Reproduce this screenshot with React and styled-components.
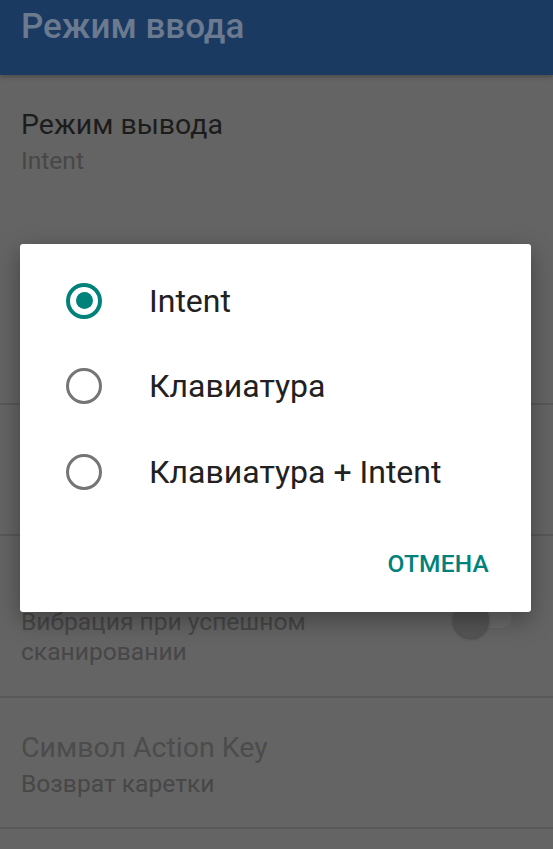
import styled, { createGlobalStyle } from "styled-components";

const GlobalStyle = createGlobalStyle`
  html, body {
    margin: 0;
    padding: 0;
    background: #646464;
    font-family: Roboto, "Noto Sans", "Liberation Sans", sans-serif;
  }
`;

const Screen = styled.div`
  position: relative;
  width: 553px;
  height: 849px;
  overflow: hidden;
  background: #646464;
`;

const Toolbar = styled.header`
  height: 75px;
  background: #1b3a62;
  padding: 7px 21px 0;
  box-sizing: border-box;
  box-shadow: 0 2px 4px rgba(0, 0, 0, 0.25);
`;

const ToolbarTitle = styled.h1`
  margin: 0;
  font-size: 35px;
  line-height: 40px;
  font-weight: 500;
  color: #6b7a8e;
`;

const PrefList = styled.div`
  display: flex;
  flex-direction: column;
`;

const PrefItem = styled.div`
  display: flex;
  align-items: flex-start;
  justify-content: space-between;
  height: ${(p) => p.h}px;
  padding: 34px 21px 0;
  box-sizing: border-box;
  border-bottom: ${(p) => (p.divider ? "2px solid #585858" : "none")};
`;

const PrefText = styled.div`
  display: flex;
  flex-direction: column;
`;

const PrefTitle = styled.div`
  font-size: 28.5px;
  line-height: 32px;
  color: ${(p) => (p.disabled ? "#4c4c4c" : "#1c1c1c")};
`;

const PrefSummary = styled.div`
  font-size: 24.6px;
  line-height: 29.5px;
  margin-top: 5px;
  color: #474747;
  max-width: 330px;
`;

const SwitchTrack = styled.div`
  position: relative;
  width: 52px;
  height: 20px;
  border-radius: 10px;
  background: #6b6b6b;
  margin-top: 38px;
  margin-right: 20px;
`;

const SwitchThumb = styled.div`
  position: absolute;
  left: -7px;
  top: -6px;
  width: 36px;
  height: 36px;
  border-radius: 50%;
  background: #555555;
  box-shadow: 0 1px 3px rgba(0, 0, 0, 0.3);
`;

const Dialog = styled.div`
  position: absolute;
  left: 20px;
  top: 244px;
  width: 511px;
  height: 368px;
  background: #ffffff;
  border-radius: 3px;
  box-shadow: 0 8px 24px rgba(0, 0, 0, 0.35);
  display: flex;
  flex-direction: column;
  padding-top: 14px;
  box-sizing: border-box;
`;

const Option = styled.label`
  display: flex;
  align-items: center;
  height: 85.5px;
  padding-left: 46px;
`;

const Radio = styled.span`
  width: 36px;
  height: 36px;
  border-radius: 50%;
  box-sizing: border-box;
  border: ${(p) => (p.checked ? "4px solid #00827b" : "3.5px solid #757575")};
  display: flex;
  align-items: center;
  justify-content: center;
  flex-shrink: 0;
`;

const RadioDot = styled.span`
  width: 17px;
  height: 17px;
  border-radius: 50%;
  background: #00827b;
`;

const OptionText = styled.span`
  margin-left: 47px;
  font-size: 32px;
  color: #212121;
`;

const Actions = styled.div`
  flex: 1;
  display: flex;
  justify-content: flex-end;
  align-items: center;
  padding: 0 42px 0 0;
`;

const TextButton = styled.button`
  border: none;
  background: none;
  padding: 0;
  font-family: inherit;
  font-size: 24.5px;
  font-weight: 500;
  color: #00827b;
  letter-spacing: 0.2px;
`;

const options = ["Intent", "Клавиатура", "Клавиатура + Intent"];

export default function App() {
  return (
    <Screen>
      <GlobalStyle />
      <Toolbar>
        <ToolbarTitle>Режим ввода</ToolbarTitle>
      </Toolbar>
      <PrefList>
        <PrefItem h={131}>
          <PrefText>
            <PrefTitle>Режим вывода</PrefTitle>
            <PrefSummary>Intent</PrefSummary>
          </PrefText>
        </PrefItem>
        <PrefItem h={199} divider>
          <PrefText>
            <PrefTitle>Префикс</PrefTitle>
            <PrefSummary>Не задан</PrefSummary>
          </PrefText>
        </PrefItem>
        <PrefItem h={131} divider>
          <PrefText>
            <PrefTitle>Звуковой сигнал</PrefTitle>
            <PrefSummary>Сигнал при сканировании</PrefSummary>
          </PrefText>
        </PrefItem>
        <PrefItem h={162} divider>
          <PrefText>
            <PrefTitle disabled>Вибрация</PrefTitle>
            <PrefSummary>Вибрация при успешном сканировании</PrefSummary>
          </PrefText>
          <SwitchTrack>
            <SwitchThumb />
          </SwitchTrack>
        </PrefItem>
        <PrefItem h={131} divider>
          <PrefText>
            <PrefTitle disabled>Символ Action Key</PrefTitle>
            <PrefSummary>Возврат каретки</PrefSummary>
          </PrefText>
        </PrefItem>
      </PrefList>
      <Dialog>
        {options.map((o, i) => (
          <Option key={o}>
            <Radio checked={i === 0}>{i === 0 && <RadioDot />}</Radio>
            <OptionText>{o}</OptionText>
          </Option>
        ))}
        <Actions>
          <TextButton>ОТМЕНА</TextButton>
        </Actions>
      </Dialog>
    </Screen>
  );
}
